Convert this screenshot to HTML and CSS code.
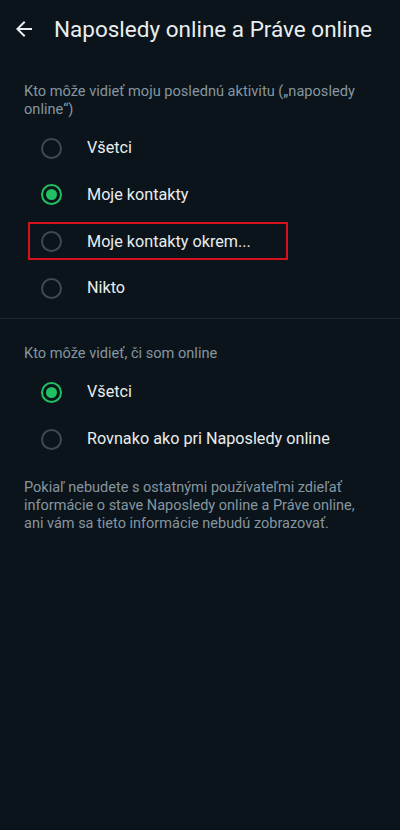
FILE: index.html
```html
<!DOCTYPE html>
<html lang="sk">
<head>
<meta charset="utf-8">
<title>Naposledy online a Práve online</title>
<link rel="stylesheet" href="styles.css">
</head>
<body>
<div class="screen">
  <header class="topbar">
    <svg class="back" viewBox="0 0 24 24" width="24" height="24"><path d="M20 11H7.83l5.59-5.59L12 4l-8 8 8 8 1.41-1.41L7.83 13H20v-2z" fill="#e9edef"/></svg>
    <h1 class="title">Naposledy online a Práve online</h1>
  </header>

  <section class="group">
    <p class="group-head">Kto môže vidieť moju poslednú aktivitu („naposledy online“)</p>
    <div class="options">
      <div class="option"><span class="radio"></span><span class="label">Všetci</span></div>
      <div class="option"><span class="radio on"></span><span class="label">Moje kontakty</span></div>
      <div class="option"><span class="radio"></span><span class="label">Moje kontakty okrem...</span><span class="highlight"></span></div>
      <div class="option"><span class="radio"></span><span class="label">Nikto</span></div>
    </div>
  </section>

  <div class="divider"></div>

  <section class="group second">
    <p class="group-head">Kto môže vidieť, či som online</p>
    <div class="options">
      <div class="option"><span class="radio on"></span><span class="label">Všetci</span></div>
      <div class="option"><span class="radio"></span><span class="label">Rovnako ako pri Naposledy online</span></div>
    </div>
  </section>

  <p class="note">Pokiaľ nebudete s ostatnými používateľmi zdieľať informácie o stave Naposledy online a Práve online, ani vám sa tieto informácie nebudú zobrazovať.</p>
</div>
</body>
</html>
```

FILE: styles.css
```css
html, body {
  margin: 0;
  padding: 0;
  background: #0b141a;
}
.screen {
  width: 400px;
  min-height: 830px;
  background: #0b141a;
  font-family: Roboto, "Noto Sans", sans-serif;
  color: #e9edef;
}
.topbar {
  height: 56px;
  display: flex;
  align-items: center;
  padding: 2px 0 0 12px;
  box-sizing: border-box;
}
.back {
  flex: none;
  display: block;
}
.title {
  margin: 0 0 0 18px;
  font-size: 22.5px;
  font-weight: 400;
  line-height: 28px;
  color: #e9edef;
  white-space: nowrap;
}
.group-head {
  margin: 26px 24px 0 24px;
  font-size: 14.6px;
  line-height: 18px;
  color: #8696a0;
}
.second .group-head {
  margin-top: 25.5px;
}
.options {
  margin-top: 7px;
}
.option {
  position: relative;
  height: 46.67px;
  display: flex;
  align-items: center;
  padding-left: 41px;
}
.radio {
  flex: none;
  width: 21px;
  height: 21px;
  box-sizing: border-box;
  border: 2px solid #3b4a54;
  border-radius: 50%;
  display: flex;
  align-items: center;
  justify-content: center;
}
.radio.on {
  border-color: #21c063;
}
.radio.on::after {
  content: "";
  width: 11px;
  height: 11px;
  border-radius: 50%;
  background: #21c063;
}
.label {
  margin-left: 25px;
  font-size: 16.2px;
  line-height: 20px;
  color: #e9edef;
}
.highlight {
  position: absolute;
  left: 28px;
  top: 4px;
  width: 260px;
  height: 38px;
  box-sizing: border-box;
  border: 2px solid #d6121c;
}
.divider {
  margin-top: 6px;
  height: 1px;
  background: #1d282f;
}
.note {
  margin: 16.5px 24px 0 24px;
  font-size: 14.5px;
  line-height: 17.8px;
  color: #8696a0;
}
```
